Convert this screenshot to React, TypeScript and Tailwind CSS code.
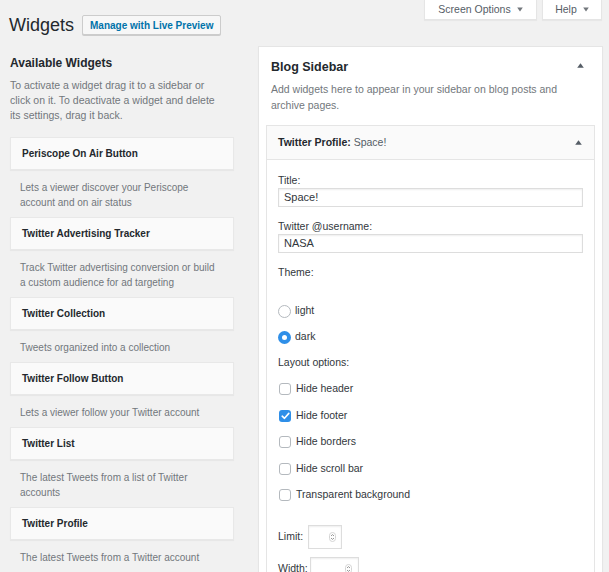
import React from "react"

const widgets: { title: string; desc: string[] }[] = [
  { title: "Periscope On Air Button", desc: ["Lets a viewer discover your Periscope", "account and on air status"] },
  { title: "Twitter Advertising Tracker", desc: ["Track Twitter advertising conversion or build", "a custom audience for ad targeting"] },
  { title: "Twitter Collection", desc: ["Tweets organized into a collection"] },
  { title: "Twitter Follow Button", desc: ["Lets a viewer follow your Twitter account"] },
  { title: "Twitter List", desc: ["The latest Tweets from a list of Twitter", "accounts"] },
  { title: "Twitter Profile", desc: ["The latest Tweets from a Twitter account"] },
]

const layoutOptions = [
  { label: "Hide header", checked: false },
  { label: "Hide footer", checked: true },
  { label: "Hide borders", checked: false },
  { label: "Hide scroll bar", checked: false },
  { label: "Transparent background", checked: false },
]

const UpArrow = () => (
  <svg width="7" height="5" viewBox="0 0 7 5">
    <path d="M3.5 0.3 L6.8 4.7 H0.2 Z" fill="#555d66" />
  </svg>
)

const DownArrow = () => (
  <svg width="6" height="5" viewBox="0 0 6 5">
    <path d="M0.2 0.5 H5.8 L3 4.5 Z" fill="#72777c" />
  </svg>
)

const Spinner = () => (
  <svg width="7" height="10" viewBox="0 0 7 10">
    <rect x="0.5" y="0.5" width="6" height="9" rx="3" fill="none" stroke="#d4d4d4" />
    <path d="M2 4 L3.5 2.6 L5 4" fill="none" stroke="#8a8a8a" strokeWidth="0.9" />
    <path d="M2 6 L3.5 7.4 L5 6" fill="none" stroke="#8a8a8a" strokeWidth="0.9" />
  </svg>
)

const Checkbox = ({ checked }: { checked: boolean }) =>
  checked ? (
    <div className="w-[12px] h-[12px] rounded-[3px] bg-[#2f8fe8] flex items-center justify-center">
      <svg width="9" height="8" viewBox="0 0 9 8">
        <path d="M1.2 4.2 L3.5 6.3 L7.8 1.4" fill="none" stroke="white" strokeWidth="1.6" strokeLinecap="round" strokeLinejoin="round" />
      </svg>
    </div>
  ) : (
    <div className="w-[12px] h-[12px] rounded-[3px] border border-[#b4b9be] bg-white" />
  )

const Radio = ({ checked }: { checked: boolean }) =>
  checked ? (
    <div className="w-[13px] h-[13px] rounded-full bg-[#2f8fe8] flex items-center justify-center">
      <div className="w-[5px] h-[5px] rounded-full bg-white" />
    </div>
  ) : (
    <div className="w-[13px] h-[13px] rounded-full border border-[#b4b9be] bg-white" />
  )

export default function App() {
  return (
    <div className="w-[609px] h-[572px] overflow-hidden bg-[#f1f1f1] text-[#23282d] font-['Liberation_Sans',Arial,sans-serif]">
      {/* top bar */}
      <div className="flex items-start">
        <div className="flex items-center gap-[8px] pt-[13px] pl-[9px]">
          <h1 className="text-[18px] leading-[24px] text-[#23282d]">Widgets</h1>
          <div className="h-[20px] px-[7px] flex items-center bg-[#f7f7f7] border border-[#cccccc] rounded-[2px] shadow-[0_1px_0_#cccccc] text-[10px] font-bold text-[#0073aa]">
            Manage with Live Preview
          </div>
        </div>
        <div className="ml-auto mr-[7px] flex gap-[5px]">
          <div className="h-[20px] w-[113px] flex items-center justify-center gap-[6px] bg-white border border-t-0 border-[#e5e5e5] shadow-[0_1px_1px_rgba(0,0,0,0.04)] text-[10.5px] text-[#555d66]">
            Screen Options <DownArrow />
          </div>
          <div className="h-[20px] w-[60px] flex items-center justify-center gap-[6px] bg-white border border-t-0 border-[#e5e5e5] shadow-[0_1px_1px_rgba(0,0,0,0.04)] text-[10.5px] text-[#555d66]">
            Help <DownArrow />
          </div>
        </div>
      </div>

      {/* columns */}
      <div className="flex mt-[9px] pl-[10px]">
        {/* available widgets */}
        <div className="w-[224px] pt-[7px]">
          <h2 className="text-[12px] leading-[20px] font-bold">Available Widgets</h2>
          <p className="mt-[5px] text-[10.5px] leading-[15px] text-[#72777c]">
            To activate a widget drag it to a sidebar or
            <br />
            click on it. To deactivate a widget and delete
            <br />
            its settings, drag it back.
          </p>
          <div className="mt-[14px]">
            {widgets.map((w) => (
              <div key={w.title}>
                <div className="h-[33px] flex items-center px-[11px] bg-[#fafafa] border border-[#e8e8e8] shadow-[0_1px_1px_rgba(0,0,0,0.04)] text-[10px] font-bold">
                  {w.title}
                </div>
                <div className="px-[10px] pt-[10px] pb-[7px] text-[10px] leading-[15px] text-[#72777c]">
                  {w.desc.map((line) => (
                    <div key={line}>{line}</div>
                  ))}
                </div>
              </div>
            ))}
          </div>
        </div>

        {/* blog sidebar */}
        <div className="ml-[24px] w-[345px] h-[560px] bg-white border border-[#e5e5e5] shadow-[0_1px_1px_rgba(0,0,0,0.04)]">
          <div className="px-[12px] pt-[10px]">
            <div className="flex items-center justify-between">
              <h3 className="text-[12.5px] leading-[20px] font-bold">Blog Sidebar</h3>
              <div className="mr-[6px] mb-[4px]">
                <UpArrow />
              </div>
            </div>
            <p className="mt-[4px] text-[10.5px] leading-[16px] text-[#72777c]">
              Add widgets here to appear in your sidebar on blog posts and
              <br />
              archive pages.
            </p>
          </div>

          <div className="mx-[7px] mt-[12px]">
            <div className="h-[35px] flex items-center justify-between pl-[11px] pr-[12px] bg-[#fafafa] border border-[#e5e5e5] text-[10.5px]">
              <div>
                <span className="font-bold">Twitter Profile:</span> <span className="text-[#555d66]">Space!</span>
              </div>
              <UpArrow />
            </div>
            <div className="h-[460px] border-x border-[#e5e5e5] bg-white px-[11px] pt-[12px] text-[10.5px] text-[#32373c]">
              <div className="leading-[16px]">Title:</div>
              <div className="h-[19px] flex items-center px-[5px] border border-[#dddddd] shadow-[inset_0_1px_2px_rgba(0,0,0,0.07)] text-[11px]">
                Space!
              </div>
              <div className="mt-[11px] leading-[16px]">Twitter @username:</div>
              <div className="h-[19px] flex items-center px-[5px] border border-[#dddddd] shadow-[inset_0_1px_2px_rgba(0,0,0,0.07)] text-[11px]">
                NASA
              </div>
              <div className="mt-[7px] h-[26px] flex items-center">Theme:</div>
              <div className="mt-[12px] h-[26px] flex items-center gap-[4px]">
                <Radio checked={false} />
                <span>light</span>
              </div>
              <div className="h-[26px] flex items-center gap-[4px]">
                <Radio checked={true} />
                <span>dark</span>
              </div>
              <div className="h-[26px] flex items-center">Layout options:</div>
              {layoutOptions.map((o) => (
                <div key={o.label} className="h-[26.5px] flex items-center gap-[5px] pl-[1px]">
                  <Checkbox checked={o.checked} />
                  <span>{o.label}</span>
                </div>
              ))}
              <div className="mt-[16px] flex items-center gap-[5px]">
                <span>Limit:</span>
                <div className="w-[34px] h-[24px] border border-[#dddddd] shadow-[inset_0_1px_2px_rgba(0,0,0,0.07)] flex items-center justify-end pr-[5px]">
                  <Spinner />
                </div>
              </div>
              <div className="mt-[8px] flex items-center gap-[2px]">
                <span>Width:</span>
                <div className="w-[49px] h-[24px] border border-[#dddddd] shadow-[inset_0_1px_2px_rgba(0,0,0,0.07)] flex items-center justify-end pr-[6px]">
                  <Spinner />
                </div>
              </div>
            </div>
          </div>
        </div>
      </div>
    </div>
  )
}
